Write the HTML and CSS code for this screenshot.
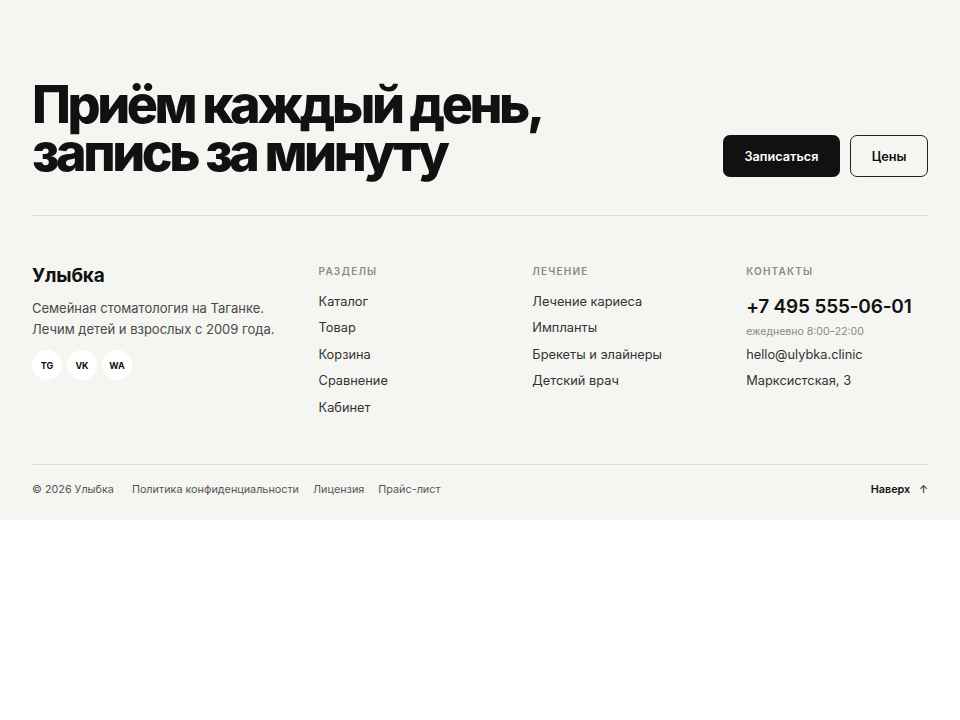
FILE: index.html
```html
<!DOCTYPE html>
<html lang="ru">
<head>
<meta charset="utf-8">
<title>Улыбка</title>
<link rel="stylesheet" href="styles.css">
</head>
<body>
<footer class="footer">
  <section class="cta">
    <h1 class="cta-title">Приём каждый день,<br>запись за минуту</h1>
    <div class="cta-actions">
      <a class="btn btn-primary" href="#">Записаться</a>
      <a class="btn btn-outline" href="#">Цены</a>
    </div>
  </section>

  <section class="cols">
    <div class="brand">
      <div class="brand-name">Улыбка</div>
      <p class="brand-text">Семейная стоматология на Таганке.<br>Лечим детей и взрослых с 2009 года.</p>
      <div class="socials">
        <a class="social" href="#">TG</a>
        <a class="social" href="#">VK</a>
        <a class="social" href="#">WA</a>
      </div>
    </div>
    <nav class="col">
      <div class="col-title">Разделы</div>
      <a class="col-link" href="#">Каталог</a>
      <a class="col-link" href="#">Товар</a>
      <a class="col-link" href="#">Корзина</a>
      <a class="col-link" href="#">Сравнение</a>
      <a class="col-link" href="#">Кабинет</a>
    </nav>
    <nav class="col">
      <div class="col-title">Лечение</div>
      <a class="col-link" href="#">Лечение кариеса</a>
      <a class="col-link" href="#">Импланты</a>
      <a class="col-link" href="#">Брекеты и элайнеры</a>
      <a class="col-link" href="#">Детский врач</a>
    </nav>
    <div class="col">
      <div class="col-title">Контакты</div>
      <a class="phone" href="#">+7 495 555-06-01</a>
      <div class="hours">ежедневно 8:00–22:00</div>
      <a class="col-link" href="#">hello@ulybka.clinic</a>
      <div class="col-link">Марксистская, 3</div>
    </div>
  </section>

  <section class="bottom">
    <div class="legal">
      <span class="copy">© 2026 Улыбка</span>
      <a class="legal-link" href="#">Политика конфиденциальности</a>
      <a class="legal-link" href="#">Лицензия</a>
      <a class="legal-link" href="#">Прайс-лист</a>
    </div>
    <a class="totop" href="#">Наверх <span class="arrow">↑</span></a>
  </section>
</footer>
</body>
</html>
```

FILE: styles.css
```css
* { box-sizing: border-box; }

html, body {
  margin: 0;
  padding: 0;
  background: #ffffff;
}

body {
  font-family: Inter, "Noto Sans", "Liberation Sans", sans-serif;
  color: #111111;
}

a { color: inherit; text-decoration: none; }

.footer {
  background: #f5f5f2;
  padding: 0 32px;
}

.cta {
  display: flex;
  justify-content: space-between;
  align-items: flex-end;
  padding: 81px 0 38px;
  border-bottom: 1px solid #dcdcd8;
}

.cta-title {
  margin: 0;
  font-size: 52px;
  font-weight: 800;
  line-height: 48px;
  letter-spacing: -0.066em;
  color: #111111;
}

.cta-actions {
  display: flex;
  gap: 10px;
}

.btn {
  display: flex;
  align-items: center;
  justify-content: center;
  height: 42px;
  border-radius: 7px;
  font-size: 12.7px;
  font-weight: 600;
}

.btn-primary {
  width: 117px;
  background: #111111;
  color: #ffffff;
}

.btn-outline {
  width: 78px;
  border: 1px solid #222222;
  color: #111111;
  background: transparent;
}

.cols {
  display: grid;
  grid-template-columns: 1.4fr 1fr 1fr 1fr;
  gap: 32px;
  padding: 46px 0 43px;
}

.brand-name {
  margin-top: 2px;
  font-size: 19px;
  font-weight: 700;
  letter-spacing: -0.01em;
  line-height: 24px;
}

.brand-text {
  margin: 10px 0 0;
  font-size: 13px;
  line-height: 21px;
  color: #4a4a4a;
}

.socials {
  display: flex;
  gap: 5px;
  margin-top: 10px;
}

.social {
  width: 30px;
  height: 30px;
  border-radius: 50%;
  background: #ffffff;
  display: flex;
  align-items: center;
  justify-content: center;
  font-size: 9px;
  font-weight: 700;
  color: #111111;
}

.col {
  display: flex;
  flex-direction: column;
  align-items: flex-start;
}

.col-title {
  font-size: 10px;
  font-weight: 600;
  letter-spacing: 0.12em;
  text-transform: uppercase;
  color: #8a8a86;
  line-height: 16px;
  margin-top: 1px;
  margin-bottom: 10px;
}

.col-link {
  font-size: 12.8px;
  line-height: 26.4px;
  color: #333333;
}

.phone {
  font-size: 19px;
  font-weight: 600;
  letter-spacing: -0.01em;
  line-height: 35px;
  color: #111111;
  margin-top: 0;
}

.hours {
  font-size: 10.5px;
  line-height: 16px;
  color: #8a8a86;
  margin-bottom: 2px;
}

.bottom {
  display: flex;
  justify-content: space-between;
  align-items: center;
  padding: 17px 0 22px;
  border-top: 1px solid #dcdcd8;
}

.legal {
  display: flex;
  gap: 14px;
  font-size: 10.8px;
  line-height: 16px;
  color: #555555;
}

.copy { margin-right: 4px; }

.totop {
  font-size: 10.8px;
  font-weight: 600;
  line-height: 16px;
  color: #111111;
}

.arrow {
  margin-left: 6px;
  font-weight: 400;
}
```
